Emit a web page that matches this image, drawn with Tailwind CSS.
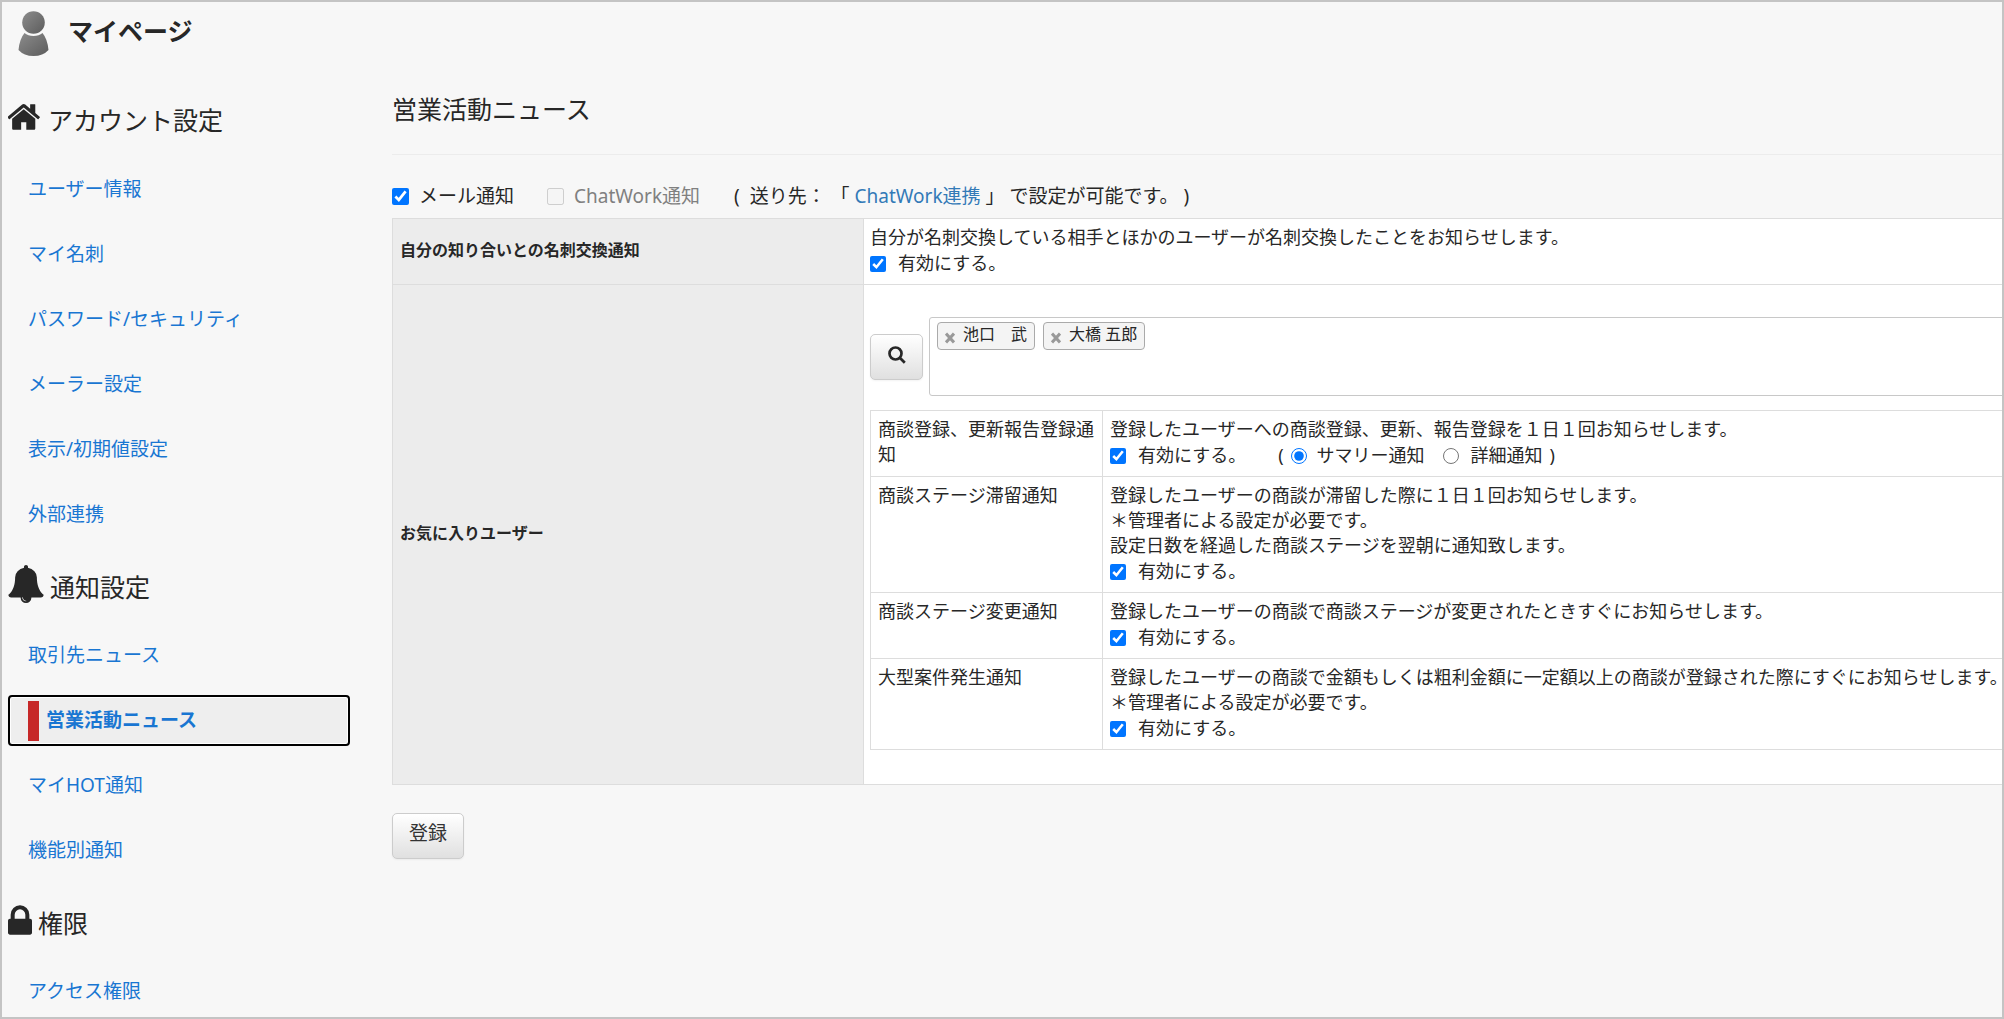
<!DOCTYPE html>
<html lang="ja">
<head>
    <meta charset="UTF-8">
    <meta name="viewport" content="width=device-width, initial-scale=1.0">
    <title>マイページ - 営業活動ニュース</title>
    <script src="https://cdn.jsdelivr.net/npm/@tailwindcss/browser@4"></script>
    <style>
        body {
            font-family: 'Noto Sans', 'Noto Sans CJK JP', sans-serif;
            text-spacing-trim: space-all;
        }
    </style>
</head>
<body class="bg-[#f7f7f7] text-[#272727]">

    <div class="h-screen overflow-hidden border-2 border-[#c4c4c4]">

        <!-- ヘッダー -->
        <header class="flex h-[68px] items-start gap-[18px] pl-4 pt-[9px]">
            <svg class="h-[46px] w-8" viewBox="0 0 32 46" aria-hidden="true">
                <defs>
                    <linearGradient id="avatarFill" x1="0" y1="0" x2="1" y2="1">
                        <stop offset="0" stop-color="#8c8c8c"/>
                        <stop offset="1" stop-color="#5c5c5c"/>
                    </linearGradient>
                </defs>
                <circle cx="15.500" cy="11.500" r="11.300" fill="url(#avatarFill)"/>
                <path d="M6.500 22Q10 25 15.500 25T24.500 22Q29.500 28 30.500 39Q25 45 15.500 45T.5 39Q1.500 28 6.500 22z" fill="url(#avatarFill)"/>
            </svg>
            <h1 class="text-[25px] leading-10 font-bold">マイページ</h1>
        </header>

        <div class="flex items-start">

            <!-- サイドメニュー -->
            <nav class="w-[348px] shrink-0 pt-[26px] pl-1.5 text-[19px] text-[#1976d2]">
                <h2 class="flex h-[50px] items-center gap-1.5 text-[25px] text-[#272727]">
                    <svg class="mb-2 h-9 w-[34px] fill-current" viewBox="64 0 1664 1792" aria-hidden="true">
                        <path d="M1408 992v480q0 26-19 45t-45 19h-384v-384h-256v384h-384q-26 0-45-19t-19-45v-480q0-1 .5-3t.5-3l575-474 575 474q1 2 1 6zm223-69l-62 74q-8 9-21 11h-3q-13 0-21-7l-692-577-692 577q-12 8-24 7-13-2-21-11l-62-74q-8-10-7-23.500t11-21.500l719-599q32-26 76-26t76 26l244 204v-195q0-14 9-23t23-9h192q14 0 23 9t9 23v408l219 182q10 8 11 21.500t-7 23.500z"/>
                    </svg>
                    アカウント設定
                </h2>
                <ul class="mt-[18px] flex flex-col gap-3.5">
                    <li><a href="#" class="flex h-[51px] items-center pl-5">ユーザー情報</a></li>
                    <li><a href="#" class="flex h-[51px] items-center pl-5">マイ名刺</a></li>
                    <li><a href="#" class="flex h-[51px] items-center pl-5">パスワード/セキュリティ</a></li>
                    <li><a href="#" class="flex h-[51px] items-center pl-5">メーラー設定</a></li>
                    <li><a href="#" class="flex h-[51px] items-center pl-5">表示/初期値設定</a></li>
                    <li><a href="#" class="flex h-[51px] items-center pl-5">外部連携</a></li>
                </ul>

                <h2 class="mt-[23px] flex h-[50px] items-center gap-1.5 text-[25px] text-[#272727]">
                    <svg class="mb-2 h-[38px] w-9 fill-current" viewBox="64 0 1664 1792" aria-hidden="true">
                        <path d="M912 1696q0-16-16-16-59 0-101.500-42.500t-42.500-101.500q0-16-16-16t-16 16q0 73 51.500 124.500t124.500 51.500q16 0 16-16zm816-288q0 52-38 90t-90 38h-448q0 106-75 181t-181 75-181-75-75-181h-448q-52 0-90-38t-38-90q50-42 91-88t85-119.500 74.500-158.500 50-206 19.500-260q0-152 117-282.500t307-158.500q-8-19-8-39 0-40 28-68t68-28 68 28 28 68q0 20-8 39 190 28 307 158.500t117 282.500q0 139 19.500 260t50 206 74.500 158.500 85 119.500 91 88z"/>
                    </svg>
                    通知設定
                </h2>
                <ul class="mt-[17px] flex flex-col gap-3.5">
                    <li><a href="#" class="flex h-[51px] items-center pl-5">取引先ニュース</a></li>
                    <li>
                        <a href="#" aria-current="page" class="flex h-[51px] items-center gap-[7px] rounded border-2 border-black bg-[#eeeeee] pl-[18px] font-bold inset-ring inset-ring-white">
                            <span class="h-10 w-[11px] bg-[#c62828]"></span>
                            営業活動ニュース
                        </a>
                    </li>
                    <li><a href="#" class="flex h-[51px] items-center pl-5">マイHOT通知</a></li>
                    <li><a href="#" class="flex h-[51px] items-center pl-5">機能別通知</a></li>
                </ul>

                <h2 class="mt-[23px] flex h-[50px] items-center gap-1.5 text-[25px] text-[#272727]">
                    <svg class="mb-2 h-[30px] w-6 fill-current" viewBox="320 128 1152 1408" aria-hidden="true">
                        <path d="M640 768h512v-192q0-106-75-181t-181-75-181 75-75 181v192zm832 96v576q0 40-28 68t-68 28h-960q-40 0-68-28t-28-68v-576q0-40 28-68t68-28h32v-192q0-184 132-316t316-132 316 132 132 316v192h32q40 0 68 28t28 68z"/>
                    </svg>
                    権限
                </h2>
                <ul class="mt-[17px]">
                    <li><a href="#" class="flex h-[51px] items-center pl-5">アクセス権限</a></li>
                </ul>
            </nav>

            <!-- 設定内容 -->
            <main class="min-w-0 flex-1 pl-[42px]">
                <h2 class="border-b border-[#ececec] pt-[21px] pb-[27px] text-[25px] leading-9">営業活動ニュース</h2>

                <form>
                    <div class="flex h-[63px] items-end whitespace-nowrap pb-1.5 text-[19px] leading-8">
                        <input type="checkbox" id="mailNotice" class="mb-[7px] size-[17px] accent-[#0075ff]" checked>
                        <label for="mailNotice" class="ml-2.5">メール通知</label>
                        <input type="checkbox" id="chatworkNotice" class="mb-[7px] ml-[33px] size-[17px]" disabled>
                        <label for="chatworkNotice" class="ml-2.5 text-[#808080]">ChatWork通知</label>
                        <p class="ml-[34px]">(&nbsp; 送り先： 「 <a href="#" class="text-[#337ab7]">ChatWork連携</a> 」 で設定が可能です。 )</p>
                    </div>

                    <!-- 右端は画面外まで続く -->
                    <table class="w-[calc(100%+40px)] table-fixed border-collapse border border-[#dddddd] bg-white text-[18px] leading-[25px]">
                        <tr>
                            <th scope="row" class="w-[471px] border border-[#dddddd] bg-[#ececec] px-[7px] pb-1 text-left text-base">自分の知り合いとの名刺交換通知</th>
                            <td class="border border-[#dddddd] px-1.5 py-1.5">
                                <p>自分が名刺交換している相手とほかのユーザーが名刺交換したことをお知らせします。</p>
                                <div class="flex h-7 items-center gap-3">
                                    <input type="checkbox" id="cardEnabled" class="size-4 accent-[#0075ff]" checked>
                                    <label for="cardEnabled" class="pb-0.5">有効にする。</label>
                                </div>
                            </td>
                        </tr>
                        <tr>
                            <th scope="row" class="border border-[#dddddd] bg-[#ececec] px-[7px] pb-1 text-left text-base">お気に入りユーザー</th>
                            <td class="border border-[#dddddd] px-1.5 pt-8 pb-[34px]">
                                <div class="flex items-center gap-1.5">
                                    <button type="button" aria-label="検索" class="flex h-[46px] w-[53px] shrink-0 items-center justify-center rounded-[5px] border border-[#cccccc] bg-linear-to-b from-white to-[#e0e0e0] pb-1 shadow-xs">
                                        <svg class="size-[18px] stroke-current" viewBox="0 0 18 18" fill="none" stroke-width="2.700" aria-hidden="true">
                                            <circle cx="7.500" cy="7.500" r="6"/>
                                            <path d="M11.500 11.500L16.800 16.800"/>
                                        </svg>
                                    </button>
                                    <ul class="flex h-[79px] flex-1 items-start gap-2 rounded-[3px] border border-[#c8c8c8] bg-white px-[7px] py-1 text-base leading-6">
                                        <li class="flex h-7 items-center gap-2 rounded border border-[#aaaaaa] bg-[#f4f4f4] px-[7px]">
                                            <button type="button" aria-label="池口　武を削除" class="mt-1">
                                                <svg class="h-3 w-2.5 stroke-[#999999]" viewBox="0 0 10 12" fill="none" stroke-width="3" aria-hidden="true"><path d="M1 1.500L9 10.500M9 1.500L1 10.500"/></svg>
                                            </button>
                                            <span class="pb-1">池口　武</span>
                                        </li>
                                        <li class="flex h-7 items-center gap-2 rounded border border-[#aaaaaa] bg-[#f4f4f4] px-[7px]">
                                            <button type="button" aria-label="大橋 五郎を削除" class="mt-1">
                                                <svg class="h-3 w-2.5 stroke-[#999999]" viewBox="0 0 10 12" fill="none" stroke-width="3" aria-hidden="true"><path d="M1 1.500L9 10.500M9 1.500L1 10.500"/></svg>
                                            </button>
                                            <span class="pb-1">大橋 五郎</span>
                                        </li>
                                    </ul>
                                </div>

                                <table class="mt-3.5 w-full table-fixed border-collapse">
                                    <tr>
                                        <td class="w-[232px] border border-[#dddddd] px-[7px] py-1.5 align-top">商談登録、更新報告登録通知</td>
                                        <td class="border border-[#dddddd] px-[7px] py-1.5">
                                            <p>登録したユーザーへの商談登録、更新、報告登録を１日１回お知らせします。</p>
                                            <div class="flex h-7 items-center">
                                                <input type="checkbox" id="dealEnabled" class="size-4 accent-[#0075ff]" checked>
                                                <label for="dealEnabled" class="ml-3 pb-0.5">有効にする。</label>
                                                <span class="ml-8 pb-0.5">(</span>
                                                <input type="radio" name="dealType" id="dealSummary" class="ml-[7px] size-4 accent-[#0075ff]" checked>
                                                <label for="dealSummary" class="ml-2.5 pb-0.5">サマリー通知</label>
                                                <input type="radio" name="dealType" id="dealDetail" class="ml-[18px] size-4 accent-[#0075ff]">
                                                <label for="dealDetail" class="ml-3 pb-0.5">詳細通知</label>
                                                <span class="ml-[7px] pb-0.5">)</span>
                                            </div>
                                        </td>
                                    </tr>
                                    <tr>
                                        <td class="border border-[#dddddd] px-[7px] py-1.5 align-top">商談ステージ滞留通知</td>
                                        <td class="border border-[#dddddd] px-[7px] py-1.5">
                                            <p>登録したユーザーの商談が滞留した際に１日１回お知らせします。<br>＊管理者による設定が必要です。<br>設定日数を経過した商談ステージを翌朝に通知致します。</p>
                                            <div class="flex h-7 items-center gap-3">
                                                <input type="checkbox" id="stayEnabled" class="size-4 accent-[#0075ff]" checked>
                                                <label for="stayEnabled" class="pb-0.5">有効にする。</label>
                                            </div>
                                        </td>
                                    </tr>
                                    <tr>
                                        <td class="border border-[#dddddd] px-[7px] py-1.5 align-top">商談ステージ変更通知</td>
                                        <td class="border border-[#dddddd] px-[7px] py-1.5">
                                            <p>登録したユーザーの商談で商談ステージが変更されたときすぐにお知らせします。</p>
                                            <div class="flex h-7 items-center gap-3">
                                                <input type="checkbox" id="changeEnabled" class="size-4 accent-[#0075ff]" checked>
                                                <label for="changeEnabled" class="pb-0.5">有効にする。</label>
                                            </div>
                                        </td>
                                    </tr>
                                    <tr>
                                        <td class="border border-[#dddddd] px-[7px] py-1.5 align-top">大型案件発生通知</td>
                                        <td class="border border-[#dddddd] px-[7px] py-1.5">
                                            <p>登録したユーザーの商談で金額もしくは粗利金額に一定額以上の商談が登録された際にすぐにお知らせします。<br>＊管理者による設定が必要です。</p>
                                            <div class="flex h-7 items-center gap-3">
                                                <input type="checkbox" id="largeEnabled" class="size-4 accent-[#0075ff]" checked>
                                                <label for="largeEnabled" class="pb-0.5">有効にする。</label>
                                            </div>
                                        </td>
                                    </tr>
                                </table>
                            </td>
                        </tr>
                    </table>

                    <button type="submit" class="mt-7 h-[46px] rounded-[5px] border border-[#cccccc] bg-linear-to-b from-white to-[#e0e0e0] px-4 pb-1.5 text-[19px] leading-7 text-[#333333] shadow-xs">登録</button>
                </form>
            </main>
        </div>
    </div>

</body>
</html>
